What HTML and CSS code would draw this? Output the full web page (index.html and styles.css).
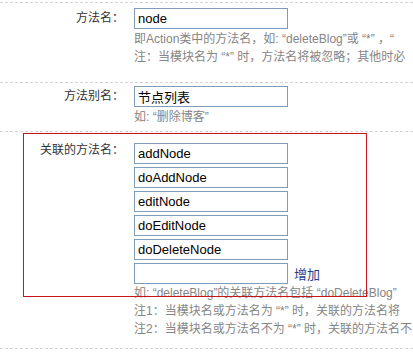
FILE: index.html
```html
<!DOCTYPE html>
<html lang="zh-CN">

<head>
    <meta charset="UTF-8">
    <title>方法设置</title>
    <link rel="stylesheet" href="styles.css">
</head>

<body>
    <div class="form">
        <div class="row row-name">
            <label class="label" for="method">方法名：</label>
            <div class="field">
                <input class="text" id="method" type="text" value="node">
                <p class="hint">即Action类中的方法名，如: “deleteBlog”或 “*” ，“</p>
                <p class="hint">注：当模块名为 “*” 时，方法名将被忽略；其他时必</p>
            </div>
        </div>

        <div class="row row-alias">
            <label class="label" for="alias">方法别名：</label>
            <div class="field">
                <input class="text" id="alias" type="text" value="节点列表">
                <p class="hint">如: “删除博客”</p>
            </div>
        </div>

        <div class="row row-related">
            <label class="label">关联的方法名：</label>
            <div class="field">
                <div class="related-list">
                    <input class="text" type="text" value="addNode">
                    <input class="text" type="text" value="doAddNode">
                    <input class="text" type="text" value="editNode">
                    <input class="text" type="text" value="doEditNode">
                    <input class="text" type="text" value="doDeleteNode">
                    <div class="add-line">
                        <input class="text" type="text" value="">
                        <a class="add-link" href="#">增加</a>
                    </div>
                </div>
                <p class="hint">如: “deleteBlog”的关联方法名包括 “doDeleteBlog”</p>
                <p class="hint">注1：当模块名或方法名为 “*” 时，关联的方法名将</p>
                <p class="hint">注2：当模块名或方法名不为 “*” 时，关联的方法名不</p>
            </div>
        </div>
        <div class="row row-end"></div>
    </div>

    <!-- red annotation frame drawn over the related methods block -->
    <div class="mark"></div>
</body>

</html>
```

FILE: styles.css
```css
html,
body {
    margin: 0;
    padding: 0;
    overflow: hidden;
}

body {
    position: relative;
    width: 413px;
    height: 354px;
    padding-top: 2px;
    box-sizing: border-box;
    background-color: #ffffff;
    font-family: "Liberation Sans", "Noto Sans CJK SC", sans-serif;
    font-size: 12px;
    color: #333333;
}

.row {
    display: grid;
    grid-template-columns: 134px 1fr;
    border-top: 1px dashed #d4d4d4;
}

.row-name {
    padding: 5px 0 16px;
}

.row-alias {
    padding: 3px 0 5px;
}

.row-related {
    padding: 11px 0 10px;
}

.label {
    padding-right: 10px;
    text-align: right;
    line-height: 20px;
    color: #333333;
    white-space: nowrap;
}

.row-related .label {
    line-height: 15px;
}

.field {
    min-width: 0;
}

.text {
    display: block;
    box-sizing: border-box;
    width: 154px;
    height: 21px;
    margin: 0;
    padding: 0 3px;
    border: 1px solid #7f9db9; /* xp style field border */
    background-color: #ffffff;
    font-family: "Liberation Sans", "Noto Sans CJK SC", sans-serif;
    font-size: 13px;
    color: #000000;
}

.related-list {
    display: flex;
    flex-direction: column;
    gap: 3px;
}

.add-line {
    display: flex;
    align-items: center;
    gap: 6px;
}

.add-link {
    color: #1e3f8c;
    text-decoration: none;
    font-size: 13px;
}

.hint {
    margin: 0;
    line-height: 18px;
    color: #858585;
    white-space: nowrap;
}

.row-name .text,
.row-alias .text {
    margin-bottom: 1px;
}

.row-end {
    padding: 0;
}

.mark {
    position: absolute;
    left: 23px;
    top: 133px;
    width: 344px;
    height: 164px;
    box-sizing: border-box;
    border: 1px solid #c4161c;
}
```
